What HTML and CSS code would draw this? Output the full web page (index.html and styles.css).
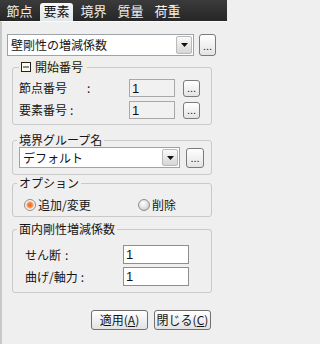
FILE: index.html
```html
<!DOCTYPE html>
<html lang="ja">
<head>
<meta charset="utf-8">
<title>要素</title>
<link rel="stylesheet" href="styles.css">
</head>
<body>
<div class="window">
  <div class="tabs">
    <div class="tab">節点</div>
    <div class="tab active">要素</div>
    <div class="tab">境界</div>
    <div class="tab">質量</div>
    <div class="tab">荷重</div>
  </div>
  <div class="panel">
    <div class="combo-row">
      <div class="combo combo-main">
        <span class="combo-text">壁剛性の増減係数</span>
        <span class="combo-btn"><svg width="7" height="4" viewBox="0 0 7 4"><polygon points="0,0 7,0 3.5,4" fill="#111"/></svg></span>
      </div>
      <button class="dots">...</button>
    </div>

    <fieldset class="group g1">
      <legend class="legend-hl"><svg class="collapse" width="10" height="10" viewBox="0 0 10 10"><rect x="0.5" y="0.5" width="9" height="9" fill="#fbfaf3" stroke="#222"/><line x1="2" y1="5" x2="8" y2="5" stroke="#222"/></svg>開始番号</legend>
      <div class="row">
        <span class="lbl">節点番号<span class="colon c1">:</span></span>
        <input class="field disabled" value="1" readonly>
        <button class="dots small">...</button>
      </div>
      <div class="row">
        <span class="lbl">要素番号<span class="colon c2">:</span></span>
        <input class="field disabled" value="1" readonly>
        <button class="dots small">...</button>
      </div>
    </fieldset>

    <fieldset class="group g2">
      <legend>境界グループ名</legend>
      <div class="combo-row inner">
        <div class="combo combo-sub">
          <span class="combo-text">デフォルト</span>
          <span class="combo-btn"><svg width="7" height="4" viewBox="0 0 7 4"><polygon points="0,0 7,0 3.5,4" fill="#111"/></svg></span>
        </div>
        <button class="dots mid">...</button>
      </div>
    </fieldset>

    <fieldset class="group g3">
      <legend>オプション</legend>
      <div class="radio-row">
        <label class="opt first"><span class="radio on"></span>追加/変更</label>
        <label class="opt"><span class="radio"></span>削除</label>
      </div>
    </fieldset>

    <fieldset class="group g4">
      <legend>面内剛性増減係数</legend>
      <div class="row r4">
        <span class="lbl4">せん断<span class="colon c3">:</span></span>
        <input class="field white" value="1">
      </div>
      <div class="row r4">
        <span class="lbl4">曲げ/軸力<span class="colon c4">:</span></span>
        <input class="field white" value="1">
      </div>
    </fieldset>

    <div class="actions">
      <button class="btn">適用(<u>A</u>)</button>
      <button class="btn">閉じる(<u>C</u>)</button>
    </div>
  </div>
</div>
</body>
</html>
```

FILE: styles.css
```css
* { box-sizing: border-box; }
html { margin: 0; padding: 0; background: #efefef; }
body {
  margin: 0;
  padding: 0;
  width: 227px;
  height: 344px;
  overflow: hidden;
  font-family: "Noto Sans CJK JP", "Noto Sans", sans-serif;
  font-size: 12px;
  line-height: 14px;
  color: #151515;
  background: #efefef;
}
.window { height: 344px; display: flex; flex-direction: column; }

.tabs {
  height: 21px;
  flex: none;
  background: linear-gradient(#3b3b3b, #262626);
  display: flex;
  align-items: flex-end;
  padding-left: 1px;
}
.tab {
  width: 33px;
  margin: 0 2px;
  height: 18px;
  text-align: center;
  color: #f0f0f0;
  font-size: 13px;
  line-height: 16px;
}
.tab.active {
  background: linear-gradient(#f6f8f9, #dfe6e9);
  color: #111;
  border-radius: 3px 3px 0 0;
}

.panel {
  flex: 1;
  background: #efefef;
  border-left: 2px solid #c8c8c8;
  border-top: 1px solid #fbfbfb;
  padding: 12px 0 0 5px;
  display: flex;
  flex-direction: column;
}

.combo-row { display: flex; align-items: center; height: 22px; gap: 5px; flex: none; }
.combo-row.inner { height: 21px; gap: 6px; }
.combo {
  display: flex;
  align-items: stretch;
  height: 100%;
  border: 1px solid #9ea3a8;
  background: #fff;
}
.combo-main { width: 187px; }
.combo-sub { width: 161px; }
.combo-text { flex: 1; padding-left: 3px; display: flex; align-items: center; white-space: nowrap; }
.combo-btn {
  width: 16px;
  margin: 1px;
  border: 1px solid #b9b9b9;
  border-radius: 2px;
  background: linear-gradient(#fafafa, #d6d6d6);
  display: flex;
  align-items: center;
  justify-content: center;
}

.dots {
  width: 17px;
  height: 22px;
  padding: 0 0 3px 0;
  border: 1px solid #7a7a7a;
  border-radius: 3px;
  background: linear-gradient(#ffffff, #e4e4e4);
  font-family: "Liberation Sans", sans-serif;
  font-size: 11px;
  line-height: 11px;
  color: #222;
  display: flex;
  align-items: flex-end;
  justify-content: center;
}
.dots.small { height: 17px; margin-left: 8px; padding-bottom: 2px; }
.dots.mid { width: 18px; height: 20px; }

.group {
  flex: none;
  margin: 0 0 0 5px;
  width: 200px;
  min-width: 0;
  border: 1px solid #c9c9c9;
  border-radius: 3px;
  padding: 0 6px;
}
.group legend {
  padding: 0 2px;
  margin-left: -2px;
  height: 14px;
  line-height: 14px;
}
.group .legend-hl {
  margin-left: 0;
  padding: 0 4px 0 2px;
  background: #f1efdf;
  display: flex;
  align-items: center;
  gap: 4px;
}
.collapse { display: block; }

.g1 { margin-top: 4px; padding-top: 5px; padding-bottom: 5px; }
.g2 { margin-top: 8px; padding-top: 0; padding-bottom: 6px; }
.g3 { margin-top: 1px; padding-top: 8px; padding-bottom: 4px; }
.g4 { margin-top: 5px; padding-top: 9px; padding-bottom: 6px; }

.row { display: flex; align-items: center; height: 18px; }
.row + .row { margin-top: 4px; }
.lbl { width: 110px; white-space: nowrap; }
.colon { display: inline-block; }
.c1 { margin-left: 20px; }
.c2 { margin-left: 3px; }

.field {
  width: 46px;
  height: 18px;
  margin: 0;
  border: 1px solid #a8a8a8;
  background: #f1f1f1;
  font-family: "Liberation Sans", sans-serif;
  font-size: 13px;
  padding: 0 2px;
  color: #111;
  outline: none;
}

.r4 { height: 19px; padding-left: 6px; }
.r4 + .r4 { margin-top: 3px; }
.lbl4 { width: 98px; white-space: nowrap; }
.c3 { margin-left: 4px; }
.c4 { margin-left: 3px; }
.field.white { width: 66px; height: 19px; background: #fff; border-color: #8e8e8e; }

.radio-row { display: flex; align-items: center; height: 14px; padding-left: 5px; }
.opt { display: flex; align-items: center; gap: 2px; white-space: nowrap; }
.opt.first { width: 114px; }
.radio {
  width: 12px;
  height: 12px;
  border-radius: 50%;
  border: 1px solid #8f8f8f;
  background: radial-gradient(circle at 40% 35%, #ffffff 0, #dedede 55%, #b4b4b4 100%);
}
.radio.on {
  background: radial-gradient(circle at 50% 50%, #f3651f 0, #f98a45 2.5px, #f8d3b8 3.6px, #f6f6f6 4.3px, #d6d6d6 100%);
}

.actions {
  flex: none;
  display: flex;
  justify-content: flex-end;
  gap: 6px;
  margin-top: 17px;
  padding-right: 16px;
}
.btn {
  width: 57px;
  height: 20px;
  padding: 0;
  border: 1px solid #707070;
  border-radius: 3px;
  background: linear-gradient(#ffffff, #e2e2e2);
  font-family: "Noto Sans CJK JP", sans-serif;
  font-size: 12px;
  line-height: 14px;
  color: #151515;
}
```
